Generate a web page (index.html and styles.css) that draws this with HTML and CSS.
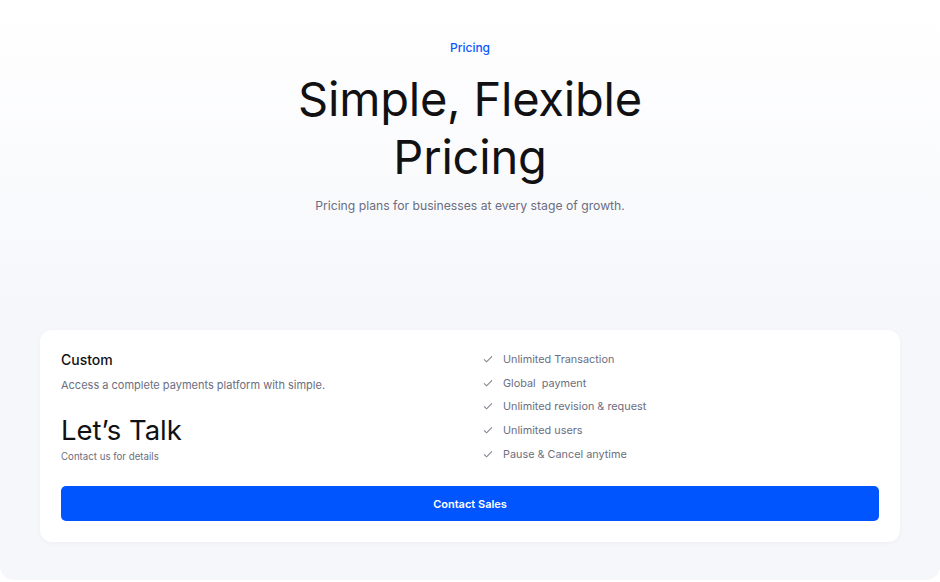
FILE: index.html
```html
<!DOCTYPE html>
<html lang="en">
<head>
    <meta charset="UTF-8">
    <meta name="viewport" content="width=device-width, initial-scale=1.0">
    <title>Pricing</title>
    <link rel="stylesheet" href="styles.css">
</head>
<body>
    <section class="pricing">
        <div class="hero">
            <p class="eyebrow">Pricing</p>
            <h1>Simple, Flexible<br>Pricing</h1>
            <p class="lead">Pricing plans for businesses at every stage of growth.</p>
        </div>

        <div class="plan-card">
            <div class="plan-grid">
                <div class="plan-info">
                    <h2>Custom</h2>
                    <p class="plan-desc">Access a complete payments platform with simple.</p>
                    <p class="plan-price">Let’s Talk</p>
                    <p class="plan-note">Contact us for details</p>
                </div>
                <ul class="features">
                    <li><svg viewBox="0 0 12 12"><path d="M2 6.3l2.6 2.5L10 3.4"/></svg>Unlimited Transaction</li>
                    <li><svg viewBox="0 0 12 12"><path d="M2 6.3l2.6 2.5L10 3.4"/></svg>Global&nbsp; payment</li>
                    <li><svg viewBox="0 0 12 12"><path d="M2 6.3l2.6 2.5L10 3.4"/></svg>Unlimited revision &amp; request</li>
                    <li><svg viewBox="0 0 12 12"><path d="M2 6.3l2.6 2.5L10 3.4"/></svg>Unlimited users</li>
                    <li><svg viewBox="0 0 12 12"><path d="M2 6.3l2.6 2.5L10 3.4"/></svg>Pause &amp; Cancel anytime</li>
                </ul>
            </div>
            <button class="contact-btn">Contact Sales</button>
        </div>
    </section>
</body>
</html>
```

FILE: styles.css
```css
body {
    margin: 0;
    background: #ffffff;
    font-family: Inter, "Noto Sans", sans-serif;
    color: #111114;
}
.pricing {
    height: 580px;
    box-sizing: border-box;
    padding: 40px 40px 0;
    background: linear-gradient(180deg, #ffffff 0%, #f6f7fb 55%, #f6f7fa 100%);
    border-radius: 14px;
}
.hero {
    text-align: center;
}
.eyebrow {
    margin: 0;
    font-size: 12px;
    line-height: 16px;
    font-weight: 500;
    color: #0a56ff;
}
h1 {
    margin: 14px 0 0;
    font-size: 47px;
    line-height: 58px;
    font-weight: 400;
    letter-spacing: -0.2px;
}
.lead {
    margin: 12px 0 0;
    font-size: 12.2px;
    line-height: 16px;
    color: #6b6e80;
}
.plan-card {
    margin-top: 116px;
    background: #ffffff;
    border-radius: 12px;
    padding: 21px 21px 21px;
    box-shadow: 0 1px 4px rgba(20, 30, 60, 0.04);
}
.plan-grid {
    display: grid;
    grid-template-columns: 1fr 1fr;
    gap: 20px;
}
.plan-info h2 {
    margin: 0;
    font-size: 14px;
    line-height: 18px;
    font-weight: 500;
}
.plan-desc {
    margin: 9px 0 0;
    font-size: 11px;
    line-height: 14px;
    color: #6b6e80;
}
.plan-price {
    margin: 22px 0 0;
    font-size: 27.5px;
    line-height: 32px;
    font-weight: 400;
}
.plan-note {
    margin: 5px 0 0;
    font-size: 9.7px;
    line-height: 12px;
    color: #6b6e80;
}
.features {
    list-style: none;
    margin: -4px 0 0;
    padding: 0 0 0 2px;
}
.features li {
    display: flex;
    align-items: center;
    gap: 9px;
    height: 23.7px;
    font-size: 10.85px;
    color: #6b6e80;
}
.features svg {
    width: 12px;
    height: 12px;
    fill: none;
    stroke: #80838f;
    stroke-width: 1.1;
}
.contact-btn {
    display: block;
    width: 100%;
    height: 35px;
    margin-top: 21px;
    border: none;
    border-radius: 5px;
    background: #0055ff;
    color: #ffffff;
    font-family: inherit;
    font-size: 11px;
    font-weight: 600;
    cursor: pointer;
}
```
